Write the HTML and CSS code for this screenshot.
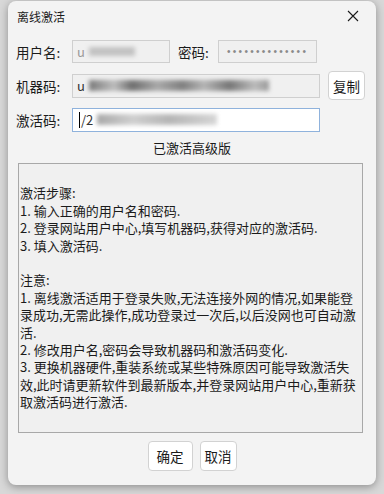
FILE: index.html
```html
<!DOCTYPE html>
<html lang="zh-CN">
<head>
    <meta charset="UTF-8">
    <meta name="viewport" content="width=device-width, initial-scale=1.0">
    <title>离线激活</title>
    <link rel="stylesheet" href="styles.css">
</head>
<body>
    <div class="backdrop">
        <div class="dialog">
            <div class="titlebar">
                <span class="title">离线激活</span>
                <span class="close">
                    <svg width="12" height="12" viewBox="0 0 12 12"><path d="M1 1L11 11M11 1L1 11" stroke="#1a1a1a" stroke-width="1.1" fill="none"/></svg>
                </span>
            </div>

            <div class="form">
                <div class="row">
                    <label class="label">用户名:</label>
                    <div class="input input--disabled input--user"><span class="txt-light">u</span><span class="blur blur--user"></span></div>
                    <label class="label label--pwd">密码:</label>
                    <div class="input input--disabled input--pwd"><span class="dots">••••••••••••••</span></div>
                </div>
                <div class="row row--tall">
                    <label class="label">机器码:</label>
                    <div class="input input--disabled input--wide"><span class="txt-dark">u</span><span class="blur blur--machine"></span></div>
                    <button class="btn btn--copy">复制</button>
                </div>
                <div class="row">
                    <label class="label">激活码:</label>
                    <div class="input input--focus input--wide"><span class="caret"></span><span class="txt-dark">/2</span><span class="blur blur--code"></span></div>
                </div>
                <div class="status">已激活高级版</div>

                <div class="notes">
<div class="line">&nbsp;</div>
<div class="line">激活步骤:</div>
<div class="line">1. 输入正确的用户名和密码.</div>
<div class="line">2. 登录网站用户中心,填写机器码,获得对应的激活码.</div>
<div class="line">3. 填入激活码.</div>
<div class="line">&nbsp;</div>
<div class="line">注意:</div>
<div class="line">1. 离线激活适用于登录失败,无法连接外网的情况,如果能登</div>
<div class="line">录成功,无需此操作,成功登录过一次后,以后没网也可自动激</div>
<div class="line">活.</div>
<div class="line">2. 修改用户名,密码会导致机器码和激活码变化.</div>
<div class="line">3. 更换机器硬件,重装系统或某些特殊原因可能导致激活失</div>
<div class="line">效,此时请更新软件到最新版本,并登录网站用户中心,重新获</div>
<div class="line">取激活码进行激活.</div>
                </div>

                <div class="actions">
                    <button class="btn btn--ok">确定</button>
                    <button class="btn btn--cancel">取消</button>
                </div>
            </div>
        </div>
    </div>
</body>
</html>
```

FILE: styles.css
```css
html, body {
    margin: 0;
    padding: 0;
}
body {
    background-color: #d8d8d8;
    font-family: "Noto Sans CJK SC", "Noto Sans", sans-serif;
    color: #1b1b1b;
    width: 384px;
    height: 494px;
    overflow: hidden;
}
.backdrop {
    padding: 1px 0 0 8px;
}
.dialog {
    width: 368px;
    height: 484px;
    background-color: #f3f3f3;
    border-radius: 8px;
    box-shadow: 0 2px 8px rgba(0, 0, 0, 0.35);
}

.titlebar {
    height: 30px;
    display: flex;
    align-items: center;
    justify-content: space-between;
    padding: 0 17px 0 9px;
}
.title {
    font-size: 12px;
}
.close {
    display: flex;
    margin-top: -1px;
}

.form {
    padding: 9px 0 0 8px;
}
.row {
    display: flex;
    align-items: center;
    height: 23px;
    margin-bottom: 8px;
}
.row--tall {
    height: 29px;
    margin-bottom: 8px;
}
.label {
    width: 56px;
    font-size: 13.5px;
    line-height: 18px;
}
.label--pwd {
    width: 40px;
    margin-left: 8px;
}

.input {
    box-sizing: border-box;
    height: 23px;
    border: 1px solid #cfcfcf;
    display: flex;
    align-items: center;
    padding-left: 4px;
    font-size: 13px;
    overflow: hidden;
}
.input--disabled {
    background-color: #f0f0f0;
}
.input--user {
    width: 98px;
}
.input--pwd {
    width: 99px;
    padding-left: 8px;
}
.input--wide {
    width: 248px;
    height: 24px;
}
.input--focus {
    background-color: #ffffff;
    border-color: #8fb2dc;
    padding-left: 6px;
}

.txt-light {
    color: #9a9a9a;
}
.txt-dark {
    color: #333333;
}
.caret {
    width: 1px;
    height: 16px;
    background-color: #000;
    margin-right: 1px;
}
.dots {
    font-family: "Liberation Sans", sans-serif;
    font-size: 10px;
    letter-spacing: 2.3px;
    color: #8a8a8a;
}

.blur {
    display: inline-block;
    height: 9px;
    margin-left: 4px;
    filter: blur(2px);
}
.blur--user {
    width: 46px;
    background-color: #c2c2c2;
}
.blur--machine {
    width: 180px;
    height: 11px;
    background: linear-gradient(90deg, #7a7a7a 0%, #bdbdbd 14%, #6f6f6f 24%, #a9a9a9 38%, #808080 52%, #b5b5b5 64%, #777777 78%, #bbbbbb 92%, #9a9a9a 100%);
}
.blur--code {
    width: 120px;
    height: 11px;
    background: linear-gradient(90deg, #a9a9a9 0%, #cfcfcf 30%, #b5b5b5 60%, #d6d6d6 100%);
}

.btn {
    box-sizing: border-box;
    font-family: "Noto Sans CJK SC", "Noto Sans", sans-serif;
    font-size: 13.5px;
    color: #1b1b1b;
    background-color: #ffffff;
    border: 1px solid #d2d2d2;
    border-radius: 4px;
    padding: 0;
    line-height: 18px;
}
.btn--copy {
    width: 37px;
    height: 29px;
    margin-left: 8px;
}

.status {
    text-align: center;
    font-size: 13px;
    line-height: 18px;
    margin: 7px 8px 6px 0;
}

.notes {
    box-sizing: border-box;
    width: 345px;
    height: 270px;
    margin-left: 2px;
    border: 1px solid #a8a8a8;
    background-color: #f0f0f0;
    padding: 3px 0 0 1px;
    font-size: 13px;
    line-height: 17.4px;
    white-space: nowrap;
    overflow: hidden;
}

.actions {
    display: flex;
    justify-content: center;
    gap: 7px;
    margin-top: 8px;
    padding-right: 8px;
}
.btn--ok {
    width: 45px;
    height: 30px;
}
.btn--cancel {
    width: 37px;
    height: 30px;
}
```
